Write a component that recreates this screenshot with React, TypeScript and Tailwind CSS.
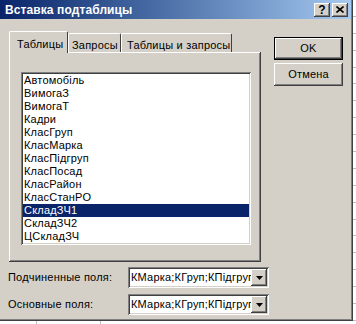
import React from "react";

const items = [
  "Автомобіль",
  "ВимогаЗ",
  "ВимогаТ",
  "Кадри",
  "КласГруп",
  "КласМарка",
  "КласПідгруп",
  "КласПосад",
  "КласРайон",
  "КласСтанРО",
  "СкладЗЧ1",
  "СкладЗЧ2",
  "ЦСкладЗЧ",
];

const raised =
  "shadow-[inset_-1px_-1px_0_#404040,inset_1px_1px_0_#ffffff,inset_-2px_-2px_0_#808080,inset_2px_2px_0_#d4d0c8]";
const sunken =
  "shadow-[inset_1px_1px_0_#808080,inset_-1px_-1px_0_#ffffff,inset_2px_2px_0_#404040,inset_-2px_-2px_0_#d4d0c8]";

function Combo({ value }: { value: string }) {
  return (
    <div className={`w-[141px] h-[21px] bg-white flex items-center p-[2px] ${sunken}`}>
      <div className="flex-1 overflow-hidden whitespace-nowrap pl-[1px] leading-[17px]">{value}</div>
      <div className={`w-[16px] h-[17px] bg-[#d4d0c8] flex items-center justify-center ${raised}`}>
        <svg width="7" height="4" viewBox="0 0 7 4">
          <path d="M0 0h7L3.5 4z" fill="#000" />
        </svg>
      </div>
    </div>
  );
}

export default function App() {
  return (
    <div
      className="w-[356px] h-[324px] bg-white flex flex-col overflow-hidden text-[11px] tracking-[0.2px] text-black"
      style={{ fontFamily: '"Liberation Sans", Arial, sans-serif' }}
    >
      <div className="flex h-[321px]">
        <div className="w-[353px] h-[321px] bg-[#d4d0c8] flex flex-col shadow-[inset_-1px_-1px_0_#404040,inset_-2px_-2px_0_#808080]">
          {/* Title bar */}
          <div className="h-[19px] w-[351px] flex items-center bg-gradient-to-r from-[#0a246a] to-[#a6caf0] pl-[5px] pr-[3px]">
            <div className="flex-1 text-white font-bold text-[12px] leading-none tracking-[0.1px]">
              Вставка подтаблицы
            </div>
            <div className="flex gap-[2px]">
              <div className={`w-[16px] h-[14px] bg-[#d4d0c8] flex items-center justify-center font-bold text-[12px] leading-none ${raised}`}>
                ?
              </div>
              <div className={`w-[16px] h-[14px] bg-[#d4d0c8] flex items-center justify-center ${raised}`}>
                <svg width="8" height="7" viewBox="0 0 8 7">
                  <path d="M0.5 0.5L7.5 6.5M7.5 0.5L0.5 6.5" stroke="#000" strokeWidth="1.6" />
                </svg>
              </div>
            </div>
          </div>

          {/* Body */}
          <div className="flex flex-1">
            {/* Left column */}
            <div className="flex flex-col pt-[12px] w-[274px]">
              <div className="ml-[9px] flex items-end h-[21px] relative z-10 whitespace-nowrap">
                <div className="h-[22px] w-[59px] bg-[#d4d0c8] border-t border-l border-white border-r border-r-[#404040] rounded-t-[2px] pl-[7px] pt-[4px] -mb-px">
                  Таблицы
                </div>
                <div className="h-[19px] w-[53px] bg-[#d4d0c8] border-t border-l border-white border-r border-r-[#404040] rounded-t-[2px] pl-[3px] pt-[3px]">
                  Запросы
                </div>
                <div className="h-[19px] w-[111px] bg-[#d4d0c8] border-t border-l border-white border-r border-r-[#404040] rounded-t-[2px] pl-[5px] pt-[3px]">
                  Таблицы и запросы
                </div>
              </div>
              <div className={`ml-[9px] w-[252px] h-[210px] pt-[20px] pl-[12px] ${raised}`}>
                <div className={`w-[230px] h-[173px] bg-white p-[2px] ${sunken}`}>
                  {items.map((it) => (
                    <div
                      key={it}
                      className={`h-[13px] leading-[13px] pl-[1px] whitespace-nowrap ${
                        it === "СкладЗЧ1" ? "bg-[#0a246a] text-white" : ""
                      }`}
                    >
                      {it}
                    </div>
                  ))}
                </div>
              </div>
              <div className="mt-[5px] pl-[8px] flex items-center h-[21px]">
                <div className="w-[120px] whitespace-nowrap">Подчиненные поля:</div>
                <Combo value="КМарка;КГруп;КПідгруп" />
              </div>
              <div className="mt-[6px] pl-[8px] flex items-center h-[21px]">
                <div className="w-[120px] whitespace-nowrap">Основные поля:</div>
                <Combo value="КМарка;КГруп;КПідгруп" />
              </div>
            </div>

            {/* Right column */}
            <div className="flex flex-col pt-[18px] gap-[3px]">
              <div className="w-[69px] h-[23px] border border-black bg-[#d4d0c8]">
                <div className={`w-full h-full flex items-center justify-center ${raised}`}>OK</div>
              </div>
              <div className={`w-[69px] h-[23px] bg-[#d4d0c8] flex items-center justify-center ${raised}`}>
                Отмена
              </div>
            </div>
          </div>
        </div>
        {/* background sliver */}
        <div className="flex-1 flex flex-col">
          {Array.from({ length: 19 }).map((_, i) => (
            <div key={i} className="h-[17px] border-b border-[#c0c0c0]" />
          ))}
        </div>
      </div>
      <div className="flex-1 flex">
        <div className="w-[37px] border-r border-[#c0c0c0]" />
        <div className="w-[64px] border-r border-[#c0c0c0]" />
      </div>
    </div>
  );
}
